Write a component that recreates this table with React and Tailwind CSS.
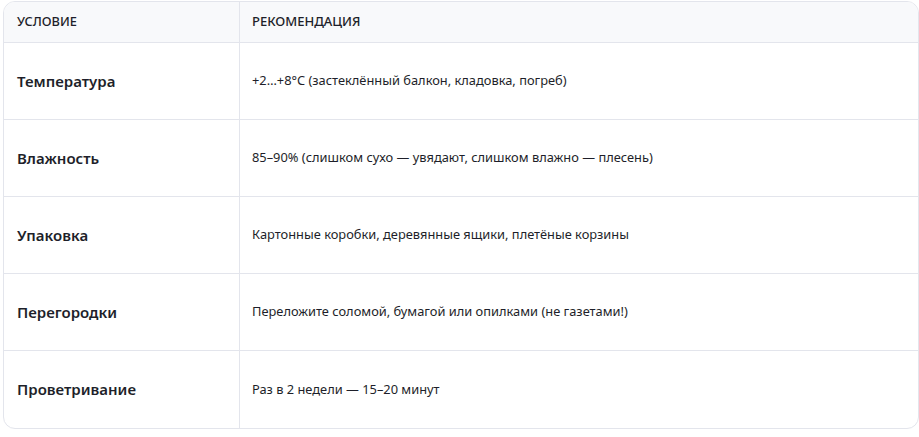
export default function App() {
  const rows = [
    ["Температура", "+2…+8°C (застеклённый балкон, кладовка, погреб)"],
    ["Влажность", "85–90% (слишком сухо — увядают, слишком влажно — плесень)"],
    ["Упаковка", "Картонные коробки, деревянные ящики, плетёные корзины"],
    ["Перегородки", "Переложите соломой, бумагой или опилками (не газетами!)"],
    ["Проветривание", "Раз в 2 недели — 15–20 минут"],
  ];
  return (
    <div className="w-[919px] h-[437px] bg-white overflow-hidden pt-[1px] pl-[3px]" style={{ fontFamily: '"Noto Sans", "Open Sans", sans-serif' }}>
      <div className="w-[916px] border border-[#e3e5ec] rounded-[12px] overflow-hidden text-[#1e1f2a]">
        <div className="flex h-[41px] bg-[#f8f9fb] border-b border-[#e3e5ec]">
          <div className="w-[236px] shrink-0 border-r border-[#e3e5ec] flex items-center pl-[13px] text-[12.8px] font-medium uppercase">Условие</div>
          <div className="flex-1 flex items-center pl-[12px] text-[13px] font-medium uppercase">Рекомендация</div>
        </div>
        {rows.map(([a, b], i) => (
          <div key={i} className={"flex h-[77px] " + (i < rows.length - 1 ? "border-b border-[#e3e5ec]" : "h-[76px]")}>
            <div className="w-[236px] shrink-0 border-r border-[#e3e5ec] flex items-center pl-[13px] text-[15px] font-semibold">{a}</div>
            <div className="flex-1 flex items-center pl-[12px] text-[12.85px]">{b}</div>
          </div>
        ))}
      </div>
    </div>
  );
}
